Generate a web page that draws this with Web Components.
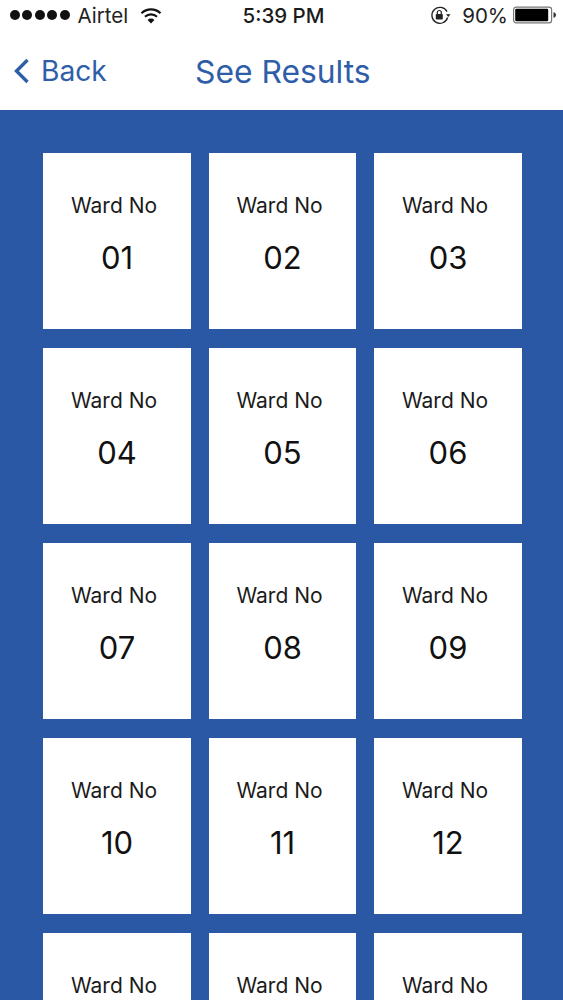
<!DOCTYPE html>
<html lang="en">
<head>
<meta charset="utf-8">
<title>See Results</title>
<style>
  html, body { margin: 0; height: 100%; overflow: hidden; background: #2a58a5; }
  body { font-family: Inter, "Liberation Sans", sans-serif; }
</style>
</head>
<body>
<results-page></results-page>

<script>
//status bar
class StatusBar extends HTMLElement {
  constructor() {
    super();
    this.attachShadow({ mode: "open" });
    this.shadowRoot.innerHTML = `
      <style>
        :host { display: grid; grid-template-columns: 1fr auto 1fr; align-items: center; height: 30px; padding: 0 6px 0 10px; font-size: 20.5px; color: #222; background: #fff; }
        .left, .right { display: flex; align-items: center; }
        .right { justify-content: flex-end; }
        .dots { display: flex; gap: 2.4px; margin-right: 8px; }
        .dots i { width: 10px; height: 10px; border-radius: 50%; background: #111; }
        .wifi { margin-left: 12px; }
        .time { font-weight: 500; color: #1c1c1c; font-size: 20.5px; }
        .pct { margin: 0 5px 0 11px; font-size: 20.5px; }
      </style>
      <div class="left">
        <div class="dots"><i></i><i></i><i></i><i></i><i></i></div>
        <span>Airtel</span>
        <svg class="wifi" width="22" height="17" viewBox="0 0 22 17">
          <path d="M1.5 6.2a13.6 13.6 0 0 1 19 0" fill="none" stroke="#111" stroke-width="2.2"/>
          <path d="M5 9.8a8.6 8.6 0 0 1 12 0" fill="none" stroke="#111" stroke-width="2.2"/>
          <path d="M11 16.5 7.6 12.9a4.8 4.8 0 0 1 6.8 0z" fill="#111"/>
        </svg>
      </div>
      <div class="time">5:39 PM</div>
      <div class="right">
        <svg width="21" height="19" viewBox="0 0 21 19">
          <path d="M17.6 11.5A8 8 0 1 1 17 5.6" fill="none" stroke="#222" stroke-width="1.3"/>
          <path d="M16 8.2h4.6l-2.3 2.8z" fill="#222"/>
          <rect x="5.8" y="8" width="7" height="5.6" rx=".8" fill="#222"/>
          <path d="M7.3 8V6.5a2 2 0 0 1 4 0V8" fill="none" stroke="#222" stroke-width="1.2"/>
        </svg>
        <span class="pct">90%</span>
        <svg width="44" height="18" viewBox="0 0 44 18">
          <rect x=".6" y="1.1" width="38" height="15.8" rx="2.6" fill="#fff" stroke="#777" stroke-width="1.2"/>
          <rect x="2.2" y="2.7" width="33" height="12.6" rx="1.2" fill="#000"/>
          <path d="M40.5 6.2c1.6.3 2.5 1.4 2.5 2.8s-.9 2.5-2.5 2.8z" fill="#333"/>
        </svg>
      </div>
    `;
  }
}
customElements.define("status-bar", StatusBar);

//navigation bar
class NavBar extends HTMLElement {
  constructor() {
    super();
    this.attachShadow({ mode: "open" });
    this.shadowRoot.innerHTML = `
      <style>
        :host { display: grid; grid-template-columns: 195px 1fr; align-items: center; height: 80px; padding-top: 2px; box-sizing: border-box; background: #fff; color: #2f5ea8; font-size: 31.8px; }
        .back { display: flex; align-items: center; gap: 11px; padding-left: 13px; font-size: 28.2px; }
        svg { display: block; }
      </style>
      <div class="back">
        <svg width="17" height="26" viewBox="0 0 17 26"><path d="M14.5 2 3.5 13l11 11" fill="none" stroke="#2f5ea8" stroke-width="3.4"/></svg>
        <span><slot name="back"></slot></span>
      </div>
      <div><slot></slot></div>
    `;
  }
}
customElements.define("nav-bar", NavBar);

//ward card
class WardCard extends HTMLElement {
  constructor() {
    super();
    this.attachShadow({ mode: "open" });
    this.shadowRoot.innerHTML = `
      <style>
        :host { display: flex; flex-direction: column; align-items: center; height: 176px; background: #fff; color: #1b1b1b; }
        .label { margin-top: 40px; padding-right: 6px; font-size: 21px; line-height: 26px; }
        .num { margin-top: 20px; font-size: 31px; line-height: 38px; color: #111; }
      </style>
      <div class="label">Ward No</div>
      <div class="num"><slot></slot></div>
    `;
  }
}
customElements.define("ward-card", WardCard);

//page
class ResultsPage extends HTMLElement {
  constructor() {
    super();
    this.attachShadow({ mode: "open" });
    let cards = "";
    for (let i = 1; i <= 15; i++) {
      cards += `<ward-card>${String(i).padStart(2, "0")}</ward-card>`;
    }
    this.shadowRoot.innerHTML = `
      <style>
        :host { display: block; height: 100vh; overflow: hidden; }
        .grid { display: grid; grid-template-columns: 148px 147px 148px; column-gap: 18px; row-gap: 19px; padding: 43px 41px 0 43px; background: #2a58a5; }
      </style>
      <status-bar></status-bar>
      <nav-bar><span slot="back">Back</span>See Results</nav-bar>
      <div class="grid">${cards}</div>
    `;
  }
}
customElements.define("results-page", ResultsPage);
</script>
</body>
</html>
